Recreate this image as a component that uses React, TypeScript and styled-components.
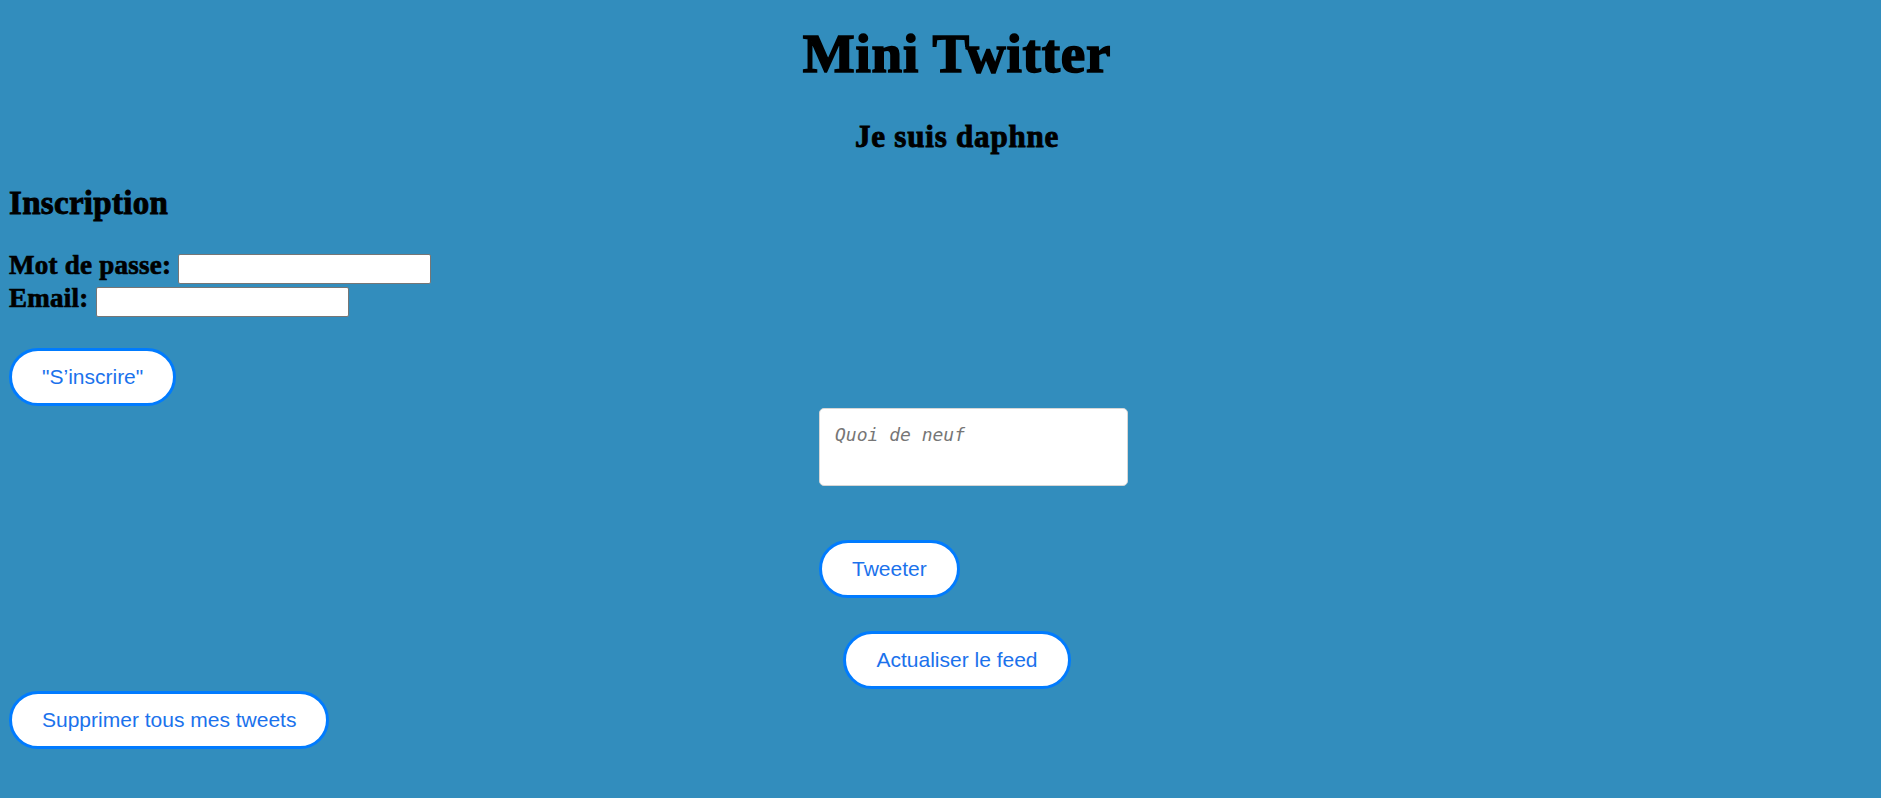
import styled, { createGlobalStyle } from "styled-components";

const GlobalStyle = createGlobalStyle`
  html, body {
    margin: 0;
    padding: 0;
    background: #328dbd;
  }
  body {
    font-family: "Liberation Serif", "Times New Roman", serif;
    color: #000;
  }
`;

const Page = styled.div`
  min-height: 798px;
  padding: 0 8px 0 9px;
  box-sizing: border-box;
  background: #328dbd;
  overflow: hidden;
`;

const Centered = styled.div<{ $top: number }>`
  margin-top: ${(p) => p.$top}px;
  padding-left: 32px;
  display: flex;
  justify-content: center;
`;

const Title = styled.h1`
  margin: 0;
  font-family: "Liberation Serif", "Times New Roman", serif;
  font-size: 55px;
  line-height: 64px;
  font-weight: 700;
  -webkit-text-stroke: 1.6px #000;
  letter-spacing: 0.8px;
`;

const SubTitle = styled.h3`
  margin: 0;
  font-size: 31px;
  line-height: 36px;
  font-weight: 700;
  -webkit-text-stroke: 0.9px #000;
  letter-spacing: 0.8px;
`;

const SectionTitle = styled.h2`
  margin: 29px 0 0;
  font-size: 33px;
  line-height: 38px;
  font-weight: 700;
  -webkit-text-stroke: 0.9px #000;
  letter-spacing: 0.3px;
`;

const Form = styled.form`
  margin-top: 30px;
  display: flex;
  flex-direction: column;
`;

const Row = styled.div`
  height: 33px;
  display: flex;
  align-items: center;
  gap: 7px;
`;

const Label = styled.label`
  font-size: 27px;
  line-height: 31px;
  font-weight: 700;
  margin-bottom: 6px;
  letter-spacing: 0.25px;
  -webkit-text-stroke: 0.7px #000;
`;

const Field = styled.input`
  width: 253px;
  height: 30px;
  box-sizing: border-box;
  border: 1px solid #767676;
  border-radius: 2px;
  background: #fff;
  padding: 0 4px;
  font-size: 16px;
`;

const PillButton = styled.button<{ $top: number }>`
  display: block;
  margin-top: ${(p) => p.$top}px;
  height: 58px;
  box-sizing: border-box;
  padding: 0 30px;
  border: 3px solid #007bff;
  border-radius: 30px;
  background: #fff;
  color: #1b72ec;
  font-family: "Liberation Sans", Arial, sans-serif;
  font-size: 21px;
  line-height: 24px;
  cursor: pointer;
`;

const Composer = styled.div`
  width: 276px;
  display: flex;
  flex-direction: column;
  align-items: flex-start;
`;

const TweetBox = styled.textarea`
  width: 309px;
  height: 78px;
  box-sizing: border-box;
  flex-shrink: 0;
  padding: 15px;
  border: 1px solid #d6d6d6;
  border-radius: 5px;
  background: #fff;
  resize: none;
  font-family: "DejaVu Sans Mono", "Liberation Mono", monospace;
  font-size: 18px;
  line-height: 21px;

  &::placeholder {
    color: #767676;
    font-style: italic;
  }
`;

export default function App() {
  return (
    <>
      <GlobalStyle />
      <Page>
        <Centered $top={22}>
          <Title>Mini Twitter</Title>
        </Centered>
        <Centered $top={33}>
          <SubTitle>Je suis daphne</SubTitle>
        </Centered>

        <SectionTitle>Inscription</SectionTitle>
        <Form onSubmit={(e) => e.preventDefault()}>
          <Row>
            <Label htmlFor="password">Mot de passe:</Label>
            <Field id="password" type="password" />
          </Row>
          <Row>
            <Label htmlFor="email">Email:</Label>
            <Field id="email" type="email" />
          </Row>
        </Form>
        <PillButton $top={30}>"S’inscrire"</PillButton>

        <Centered $top={2}>
          <Composer>
            <TweetBox placeholder="Quoi de neuf" />
            <PillButton $top={54}>Tweeter</PillButton>
          </Composer>
        </Centered>

        <Centered $top={33}>
          <PillButton $top={0}>Actualiser le feed</PillButton>
        </Centered>

        <PillButton $top={2}>Supprimer tous mes tweets</PillButton>
      </Page>
    </>
  );
}
